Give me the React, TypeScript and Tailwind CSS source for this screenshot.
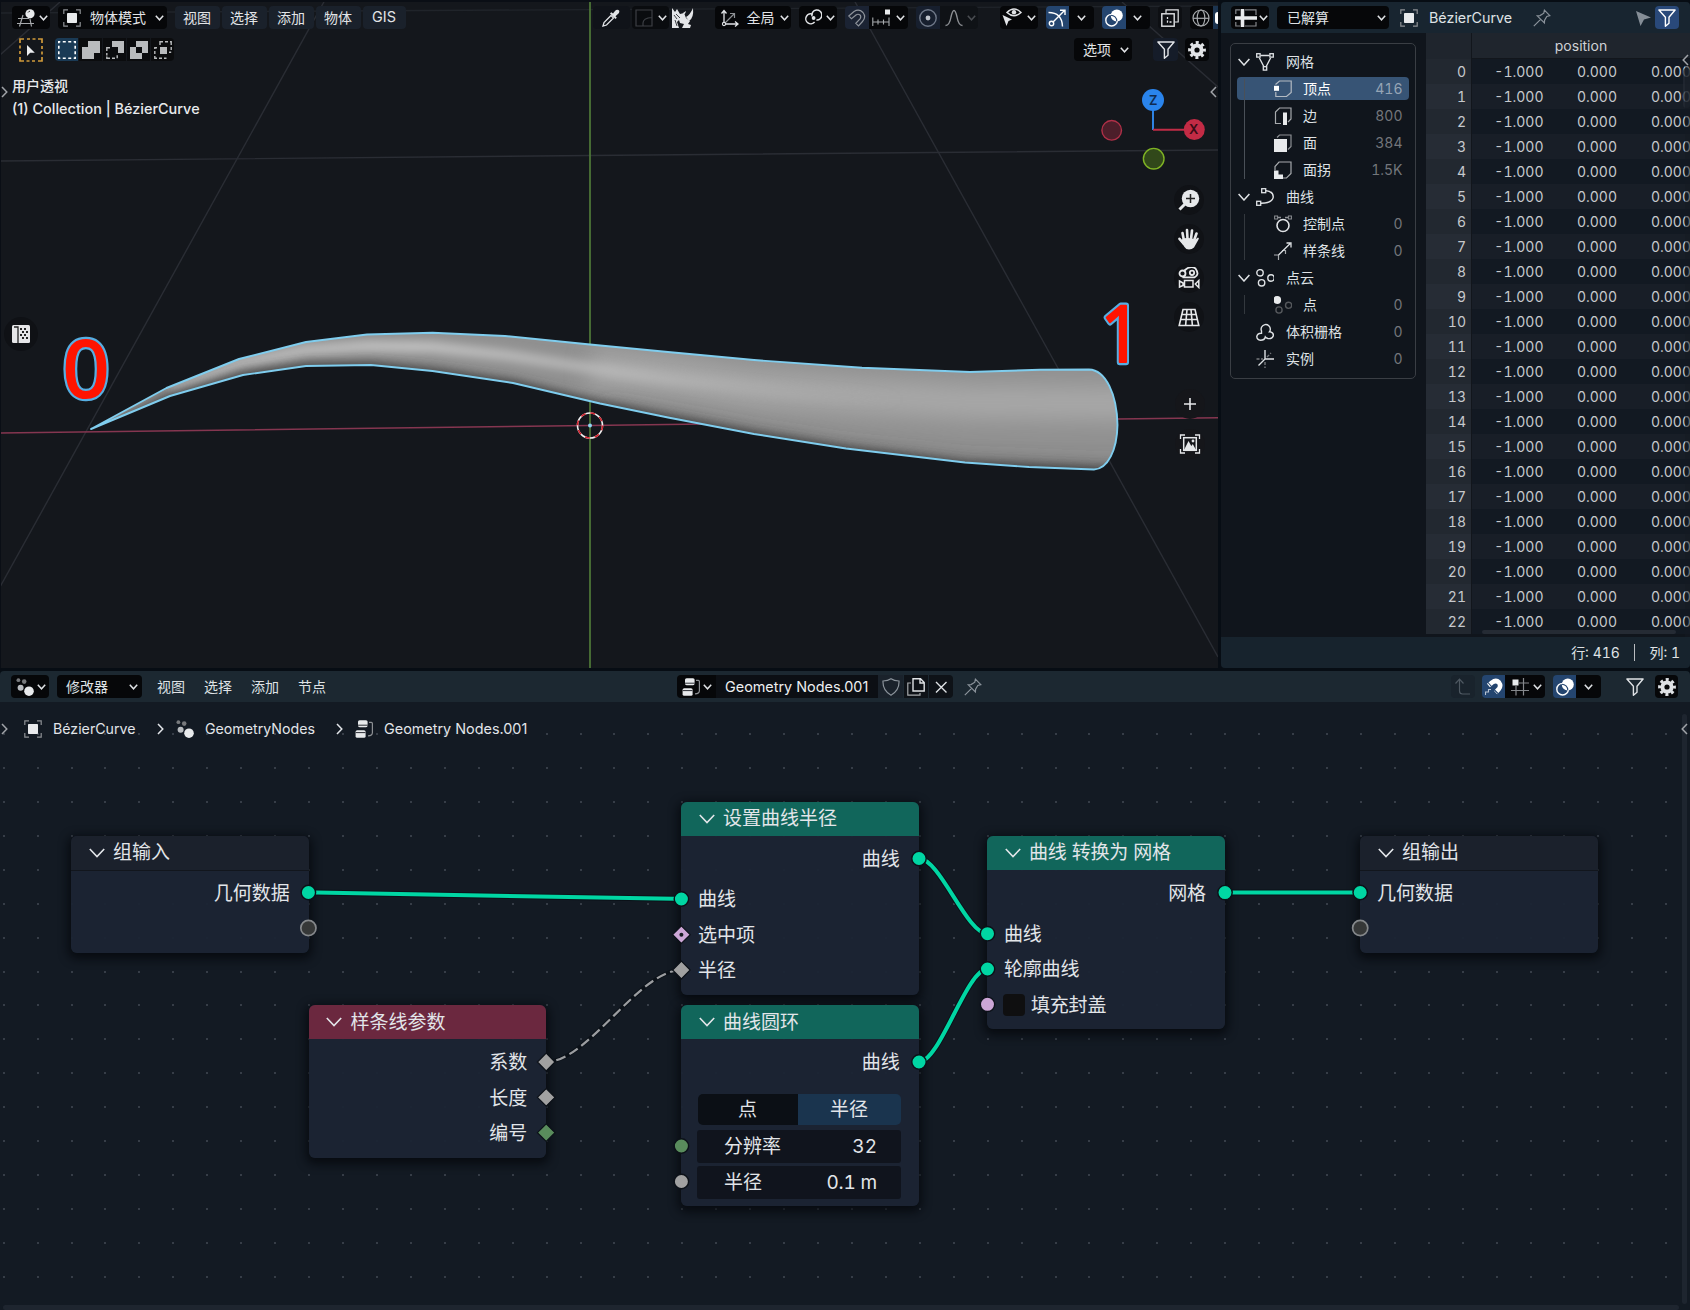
import React from "react";

type IconProps = { children: React.ReactNode; className?: string };

/** 18px icon frame shared by every toolbar glyph. */
const Ic = ({ children, className = "" }: IconProps) => (
  <svg viewBox="0 0 18 18" width={18} height={18} fill="none" stroke="currentColor" strokeWidth={1.4} className={`shrink-0 ${className}`}>
    {children}
  </svg>
);

const Down = ({ className = "" }: { className?: string }) => (
  <svg viewBox="0 0 9 6" width={9} height={6} fill="none" stroke="currentColor" strokeWidth={1.5} className={`shrink-0 ${className}`}>
    <path d="M0.8 0.8 4.5 4.8 8.2 0.8" />
  </svg>
);

const BigDown = ({ className = "" }: { className?: string }) => (
  <svg viewBox="0 0 16 10" width={16} height={10} fill="none" stroke="currentColor" strokeWidth={1.6} className={`shrink-0 ${className}`}>
    <path d="M0.8 1 8 8.6 15.2 1" />
  </svg>
);

const Side = ({ flip = false, className = "" }: { flip?: boolean; className?: string }) => (
  <svg viewBox="0 0 7 12" width={7} height={12} fill="none" stroke="currentColor" strokeWidth={1.5} className={className}>
    <path d={flip ? "M6 1 1.2 6 6 11" : "M1 1 5.8 6 1 11"} />
  </svg>
);

const ObjectIcon = () => (
  <Ic>
    <path d="M0.8 5V0.8H5M13 0.8h4.2V5M17.2 13v4.2H13M5 17.2H0.8V13" stroke="#8d9094" strokeWidth={1.2} />
    <rect x="4" y="4" width="10" height="10" rx="0.8" fill="#e8eaec" stroke="none" />
  </Ic>
);

const FilterIcon = ({ className = "" }: { className?: string }) => (
  <Ic className={className}>
    <path d="M0.9 1H17.1L11 8.2V14.2L7.4 17.2V8.2Z" strokeLinejoin="round" />
  </Ic>
);

const GearIcon = () => (
  <Ic>
    <circle cx="9" cy="9" r="4.6" strokeWidth={4} />
    <circle cx="9" cy="9" r="7.4" strokeWidth={3} strokeDasharray="3 2.812" strokeDashoffset="1.5" />
  </Ic>
);

const OverlayIcon = () => (
  <Ic>
    <circle cx="11.8" cy="6.4" r="6" fill="#fff" stroke="none" />
    <circle cx="6.6" cy="11.2" r="5.8" stroke="#fff" />
    <path d="M5.8 6.2a6 6 0 0 1 6 6" stroke="#24456f" strokeWidth={1.1} />
  </Ic>
);

const PinIcon = () => (
  <Ic>
    <path d="M11.4 1.2 16.8 6.6 13.8 7.4 11.6 11.2 11.4 14 4.2 6.8 7 6.6 10.8 4.2ZM7.6 10.4 0.8 17.2" strokeWidth={1.2} />
  </Ic>
);

const NodesDotsIcon = () => (
  <Ic>
    <g stroke="none">
      <circle cx="2.4" cy="2.2" r="1.9" fill="#77797c" />
      <circle cx="8.2" cy="3.6" r="2.3" fill="#77797c" />
      <circle cx="4.6" cy="9.8" r="3" fill="#b9bcc0" />
      <circle cx="13" cy="13.2" r="4.8" fill="#e8eaec" />
    </g>
  </Ic>
);

const NodeTreeIcon = () => (
  <Ic>
    <rect x="3" y="0.2" width="9.6" height="7" rx="1.6" fill="#e8eaec" stroke="none" />
    <rect x="0.6" y="10.2" width="10" height="7.6" rx="1.6" fill="#e8eaec" stroke="none" />
    <path d="M2.8 5.2h10M0.8 12.6h9.6" stroke="#15191f" strokeWidth={0.9} />
    <path d="M14 2.4h2.4q1 0 1 1v9.4q0 3-4.4 3" stroke="#8d9094" strokeWidth={1.2} />
  </Ic>
);

/** Rounded button holding toolbar content. */
const Btn = ({ children, className = "", tone = "bg-[#060709]" }: IconProps & { tone?: string }) => (
  <div className={`flex h-[23px] shrink-0 items-center rounded-[4px] ${tone} ${className}`}>{children}</div>
);

const ViewportScene = () => {
  const body =
    "M91 429 166.5 388 239 359 306 342 367 334.500 432.500 332.700 505 336 590 344.500 668 352 754 360 862 367.800 970 372 1040 369.800 1089 369.500C1106 370 1117 395 1117.500 425C1117 450 1108 469 1094 469.500L1029 467 965 462.500 846 448.500 754 434 668 417.500 600 403.500 513 383 432.500 371 371 365 306 366 243 375 170 396Z";
  return (
    <svg className="absolute inset-0" width={1218} height={668} viewBox="0 0 1218 668" fill="none">
      <defs>
        <clipPath id="body">
          <path d={body} />
        </clipPath>
        <filter id="wide" filterUnits="userSpaceOnUse" x="0" y="200" width="1218" height="400">
          <feGaussianBlur stdDeviation="11" />
        </filter>
        <filter id="narrow" filterUnits="userSpaceOnUse" x="0" y="200" width="1218" height="400">
          <feGaussianBlur stdDeviation="5" />
        </filter>
        <linearGradient id="shine" gradientUnits="userSpaceOnUse" x1="150" y1="0" x2="900" y2="0">
          <stop offset="0" stopColor="#c8c8c8" stopOpacity="0.6" />
          <stop offset="0.35" stopColor="#c6c6c6" />
          <stop offset="0.65" stopColor="#bcbcbc" stopOpacity="0.75" />
          <stop offset="1" stopColor="#aaaaaa" stopOpacity="0" />
        </linearGradient>
        <linearGradient id="shade" gradientUnits="userSpaceOnUse" x1="500" y1="0" x2="1000" y2="0">
          <stop offset="0" stopColor="#444444" stopOpacity="0" />
          <stop offset="0.5" stopColor="#4a4a4a" stopOpacity="0.8" />
          <stop offset="1" stopColor="#4c4c4c" stopOpacity="0.9" />
        </linearGradient>
      </defs>
      <g stroke="#2a2d34" strokeWidth={1.4}>
        <path d="M325 0 0 587" />
        <path d="M854 0 1218 657" />
        <path d="M60 2 0 55" />
        <path d="M1122 2 1218 87" />
        <path d="M0 161 590 155.500 1218 150" />
        <path d="M0 13 1218 6" stroke="#20242a" />
      </g>
      <path d="M0 433 590 425.500 1218 417.800" stroke="#853650" strokeWidth={1.5} />
      <path d="M590 0V668" stroke="#4f7a38" strokeWidth={1.7} />
      <g clipPath="url(#body)">
        <path d={body} fill="#909090" />
        <path d="M590 368 668 376 754 388 862 396 970 402 1180 404" stroke="#a8a8a8" strokeWidth={34} filter="url(#wide)" />
        <path d="M600 415 668 430 754 448 846 463 965 477 1180 486" stroke="url(#shade)" strokeWidth={24} filter="url(#wide)" />
        <path d="M170 391 240 363 306 350 367 346 432 347 505 355 590 368 668 379 790 392 900 400" stroke="url(#shine)" strokeWidth={10} filter="url(#narrow)" />
        <path d="M120 425 170 400 243 378 306 369 371 368 432 374 513 386 600 407 668 421 754 438 846 453 965 468 1160 476" stroke="#444444" strokeWidth={13} filter="url(#narrow)" />
      </g>
      <path d={body} stroke="#7fcdee" strokeWidth={1.9} strokeLinejoin="round" />
      <circle cx="590" cy="425.500" r="12.500" stroke="#f0f0f0" strokeWidth={1.6} />
      <circle cx="590" cy="425.500" r="12.500" stroke="#d0202c" strokeWidth={1.6} strokeDasharray="4.9 4.920" />
      <circle cx="590" cy="425.500" r="2" fill="#8fd4f2" />
      <g fontFamily="'Noto Sans', sans-serif" fontWeight={400} fontSize={79} textAnchor="middle" strokeLinejoin="round">
        <g stroke="#56aee2" strokeWidth={6.500} fill="#56aee2">
          <text transform="translate(86 397) scale(1.03 1)">0</text>
          <text transform="translate(1121 362) scale(0.92 1)">1</text>
        </g>
        <g stroke="#ff1400" strokeWidth={2.200} fill="#ff1400">
          <text transform="translate(86 397) scale(1.03 1)">0</text>
          <text transform="translate(1121 362) scale(0.92 1)">1</text>
        </g>
      </g>
      <g strokeWidth={2}>
        <path d="M1153 130V108" stroke="#2f83e3" />
        <path d="M1153 129.700H1186" stroke="#c02c46" />
        <circle cx="1153" cy="100" r="11" fill="#2a84ec" />
        <circle cx="1194.300" cy="129.600" r="10.500" fill="#c32b45" />
        <circle cx="1111.700" cy="130.300" r="9.800" fill="#4c1e2a" stroke="#b03048" strokeWidth={1.4} />
        <circle cx="1153.700" cy="158.700" r="10.300" fill="#31481a" stroke="#7fb324" strokeWidth={1.4} />
      </g>
      <g fontFamily="Inter, sans-serif" fontSize={13} fontWeight={600} textAnchor="middle">
        <text x="1153.300" y="104.800" fill="#0f2a50">Z</text>
        <text x="1193.800" y="134.300" fill="#3a0c16">X</text>
      </g>
    </svg>
  );
};

const Nav = ({ children, tone = "bg-[#101216]" }: { children: React.ReactNode; tone?: string }) => (
  <div className={`flex size-[30px] items-center justify-center rounded-full text-[#e6e8ea] ${tone}`}>
    <svg viewBox="0 0 22 22" width={22} height={22} fill="none" stroke="currentColor" strokeWidth={1.4}>
      {children}
    </svg>
  </div>
);

const MENUS = ["视图", "选择", "添加", "物体"];

const Viewport = () => (
  <section className="relative h-[668px] w-[1218px] shrink-0 overflow-hidden bg-[#14171c]">
    <ViewportScene />
    <div className="absolute inset-x-0 top-0 h-[2px] bg-[#0a0e15]" />
    <div className="absolute inset-y-0 left-0 w-px bg-[#0a0e15]" />
    <div className="relative flex h-full flex-col text-[#e2e4e7]">
      <div className="flex h-[29px] shrink-0 items-end pl-3">
        <Btn className="w-[38px] pl-[5px]">
          <Ic>
            <path d="M1 9.500h11M0 14.500h17M6 6 2.500 17.500M13 10l1.500 7.500" stroke="#a7aaad" strokeWidth={1.2} />
            <circle cx="13" cy="4.800" r="4.600" fill="#e8eaec" stroke="none" />
            <path d="M11 3.500a2.500 2.500 0 0 1 2-1.300" stroke="#333" strokeWidth={1} />
          </Ic>
          <Down className="ml-[4px]" />
        </Btn>
        <Btn className="ml-2 w-[109px] pl-[5px]">
          <ObjectIcon />
          <span className="ml-[9px] text-[14px]">物体模式</span>
          <Down className="ml-[9px]" />
        </Btn>
        <div className="ml-[7.500px] flex gap-[2px]">
          {MENUS.map((m) => (
            <div key={m} className="flex h-[23px] w-[45px] items-center justify-center rounded-[4px] bg-[#1a212b] text-[14px]">{m}</div>
          ))}
          <div className="flex h-[23px] w-[43px] items-center justify-center rounded-[4px] bg-[#1a212b] text-[14.400px]">GIS</div>
        </div>
        <Btn className="ml-[187px] w-[37px] justify-center" tone="bg-[#101319]">
          <Ic>
            <path d="M1 17 2 13.500 9 6.500 11.500 9 4.500 16Z" strokeWidth={1.3} />
            <path d="M8 4.500 13.500 10 14.800 8.800 13.500 7.300 17 4Q18 1.500 16.500 1 14.500 0 13 2L11 4.500 9.300 3.200Z" fill="currentColor" stroke="none" />
          </Ic>
        </Btn>
        <Btn className="ml-[2px] w-[37px] pl-[4px]" tone="bg-[#0a0c0f]">
          <Ic className="-ml-px text-[#3c3f44]">
            <path d="M8 17H1V1H17V17H8V14Q8 9 17 8.500" strokeWidth={1.2} />
          </Ic>
          <Down className="ml-[5px]" />
        </Btn>
        <div className="ml-[3px] flex h-[23px] w-[22px] items-center justify-center">
          <svg viewBox="0 0 22 20" width={22} height={20} fill="#e4e6e8">
            <path d="M0 0 3 4 5 1 8 6 12 5 14 10 18 13 16 16 19 17 18 20 10 20 12 16 8 15 7 12 5 14 7 20 0 20Z" />
            <path d="M21 0Q22 10 17 13L14 9Q18 7 21 0ZM14 3Q13 8 11 5Z" />
            <path d="M2 7 5 11M4 6 8 10M3 12 5 18" stroke="#14171c" strokeWidth={0.8} />
          </svg>
        </div>
        <Btn className="ml-[21px] w-[76px] pl-[6px]">
          <Ic>
            <path d="M3 16V2M0.500 4.500 3 1.500 5.500 4.500M3 15H16M14 12.500 17 15 14 17.500" strokeWidth={1.3} />
            <path d="M3 15 13 5M9 4.500h4.500V9" stroke="#8d9094" strokeWidth={1.2} />
            <circle cx="3" cy="15" r="1.600" fill="#060709" strokeWidth={1.100} />
          </Ic>
          <span className="ml-[8px] text-[14px]">全局</span>
          <Down className="ml-[5px]" />
        </Btn>
        <Btn className="ml-2 w-[38px] pl-[5px]">
          <Ic>
            <path d="M8.800 5.200A5 5 0 1 0 10.600 13" strokeWidth={1.500} />
            <path d="M8 7.200A5 5 0 1 1 12.400 11" strokeWidth={1.500} />
            <circle cx="9.600" cy="9" r="1.900" fill="currentColor" stroke="none" />
          </Ic>
          <Down className="ml-[4px]" />
        </Btn>
        <div className="ml-2 flex">
          <Btn className="w-[24px] justify-center rounded-r-none" tone="bg-[#1b2333]">
            <Ic className="text-[#8f949c]">
              <path d="M0.800 7 6 2.500Q11 -0.500 15 3.500 18.500 8 14.500 12.500L10.500 17 7.800 14.300 12 9.800Q13.500 7.500 12 6 10 4.500 8 6L3.500 9.800Z" strokeWidth={1.200} />
            </Ic>
          </Btn>
          <Btn className="w-[39px] rounded-l-none pl-[3px]">
            <Ic>
              <path d="M0.800 8.500V17M6 10.500v5M11.500 10.500v5M17 8.500V17M0.800 13H17" strokeWidth={1.100} stroke="#a7aaad" />
              <rect x="13" y="0.500" width="5" height="5" fill="#e8eaec" stroke="none" />
            </Ic>
            <Down className="ml-[6px]" />
          </Btn>
        </div>
        <div className="ml-2 flex">
          <Btn className="w-[24px] justify-center rounded-r-none" tone="bg-[#171f2e]">
            <Ic className="text-[#6f7888]">
              <circle cx="9" cy="9" r="8.200" />
              <circle cx="9" cy="9" r="2.400" fill="#c0c5cc" stroke="none" />
            </Ic>
          </Btn>
          <Btn className="w-[38px] rounded-l-none pl-[5px] text-[#8d9094]" tone="bg-[#0f1216]">
            <Ic><path d="M0.500 16.500Q4.500 16.500 6 8 7.500 1.500 9 1.500T12 8Q13.500 16.500 17.500 16.500" /></Ic>
            <Down className="ml-[4px] text-[#4a4d52]" />
          </Btn>
        </div>
        <Btn className="ml-[22px] w-[38px] pl-[2px]">
          <svg viewBox="0 0 20 19" width={20} height={19} fill="none" stroke="currentColor" strokeWidth={1.500}>
            <path d="M5 4.500Q12 -2.500 19 4.500 12 11 5 4.500Z" />
            <circle cx="12" cy="4.300" r="2.200" fill="currentColor" stroke="none" />
            <path d="M0.500 7 10 11.500 6.500 13 4.500 18Z" fill="currentColor" stroke="none" />
          </svg>
          <Down className="ml-[5px]" />
        </Btn>
        <div className="ml-2 flex">
          <Btn className="w-[23px] justify-center rounded-r-none text-white" tone="bg-[#24456f]">
            <Ic>
              <path d="M0.500 3.500Q14 3.500 14.500 17.500" />
              <path d="M4.800 13.200 16.500 1.500M12 1.200h5V6" />
              <circle cx="3.500" cy="14.500" r="2.200" />
            </Ic>
          </Btn>
          <Btn className="w-[25px] justify-center rounded-l-none"><Down /></Btn>
        </div>
        <div className="ml-[8px] flex">
          <Btn className="w-[24px] justify-center rounded-r-none" tone="bg-[#24456f]"><OverlayIcon /></Btn>
          <Btn className="w-[24px] justify-center rounded-l-none"><Down /></Btn>
        </div>
        <Btn className="ml-2 w-[24px] justify-center" tone="bg-[#0d0f13]">
          <Ic>
            <rect x="0.800" y="4.800" width="12.400" height="12.400" />
            <path d="M5 4V0.800H17.200V13H14" strokeWidth={1.200} />
            <path d="M6.500 8v5h4" strokeDasharray="2 1.500" strokeWidth={1.300} />
          </Ic>
        </Btn>
        <Btn className="ml-[8px] w-[23px] justify-center rounded-r-none">
          <Ic className="text-[#a7aaad]">
            <circle cx="9" cy="9" r="8" strokeWidth={1.200} />
            <ellipse cx="9" cy="9" rx="3.800" ry="8" strokeWidth={1.200} />
            <path d="M1 9.300h16" strokeWidth={1.200} />
          </Ic>
        </Btn>
        <div className="flex h-[23px] w-[5px] items-center justify-end overflow-hidden bg-[#1c3450]">
          <div className="h-[12px] w-[3px] rounded-l-full bg-white" />
        </div>
      </div>

      <div className="flex h-[33px] shrink-0 items-end pl-[19px]">
        <svg viewBox="0 0 24 24" width={24} height={24} fill="none" stroke="#d09a3a" strokeWidth={1.700}>
          <path d="M1 5V1h4M8 1h3M13.500 1h3M19 1h4v4M23 8v3M23 13.500v3M23 19v4h-4M16 23h-3M10.500 23h-3M5 23H1v-4M1 16v-3M1 10.500v-3" />
          <path d="M8 7v11l3.200-3.300h4.600Z" fill="#eceef0" stroke="none" />
        </svg>
        <div className="ml-[12px] flex h-[24px] gap-px pb-px">
          <div className="flex w-[23px] items-center justify-center rounded-l-[4px] bg-[#1a3a55] text-white">
            <Ic><rect x="0.800" y="0.800" width="16.400" height="16.400" strokeDasharray="3 2.466" strokeDashoffset="1.500" strokeWidth={1.600} /></Ic>
          </div>
          <div className="flex w-[23px] items-center justify-center bg-[#0b0c0e]">
            <Ic><path d="M6 0H18V12H12V18H0V6H6Z" fill="#b9bbbd" stroke="none" /></Ic>
          </div>
          <div className="flex w-[23px] items-center justify-center bg-[#0b0c0e]">
            <Ic>
              <path d="M6 0H18V12H12V6H6Z" fill="#b9bbbd" stroke="none" />
              <path d="M4 6.800H0.800V10M0.800 12v2.500M0.800 15.500v1.700H4M6 17.200h3M11.200 17.200v-3" stroke="#b9bbbd" />
            </Ic>
          </div>
          <div className="flex w-[23px] items-center justify-center bg-[#0b0c0e]">
            <Ic><path d="M6 0H18V12H12V18H0V6H6ZM6 6V12H12V6Z" fill="#b9bbbd" fillRule="evenodd" stroke="none" /></Ic>
          </div>
          <div className="flex w-[23px] items-center justify-center rounded-r-[4px] bg-[#0b0c0e]">
            <Ic>
              <path d="M6 4V0.800h3M11 0.800h3M16 0.800h1.200V4M17.200 6v3M17.200 11.200H15M12.500 17.200H10M8 17.200H5M3 17.200H0.800V15M0.800 13v-3M0.800 8V6.800H3" stroke="#b9bbbd" />
              <rect x="6" y="6" width="7" height="7" fill="#b9bbbd" stroke="none" />
            </Ic>
          </div>
        </div>
        <Btn className="mb-px ml-[900px] w-[58px] pl-[9px]">
          <span className="text-[14px]">选项</span>
          <Down className="ml-[9px]" />
        </Btn>
        <Btn className="mb-px ml-[21px] w-[25px] justify-center" tone="bg-[#151c29]"><FilterIcon /></Btn>
        <Btn className="mb-px ml-[7px] w-[24px] justify-center"><GearIcon /></Btn>
      </div>

      <div className="mt-[14px] flex flex-col pl-3 font-medium text-[#e8eaec]">
        <span className="h-[22px] text-[14px] leading-[20px]">用户透视</span>
        <span className="h-[22px] text-[14.450px] leading-[22px]">(1) Collection | BézierCurve</span>
      </div>
    </div>
    <Side className="absolute left-[1px] top-[86px] text-[#a0a3a8]" />
    <Side flip className="absolute left-[1210px] top-[86px] text-[#a0a3a8]" />

    <div className="absolute left-[1174px] top-[185px] flex flex-col gap-[9px]">
      <Nav>
        <circle cx="12.500" cy="9.500" r="8.700" fill="currentColor" stroke="none" />
        <path d="M7 15 1.500 20.500" strokeWidth={3} />
        <path d="M12.500 5v9M8 9.500h9" stroke="#222" strokeWidth={1.500} />
      </Nav>
      <Nav>
        <path d="M6 13 4.500 5M9.500 11 9 2M13 11 14 2.500M16 12.500 18.500 5.500M5.500 15.500 1.500 10.800" strokeWidth={2.600} strokeLinecap="round" />
        <path d="M4.700 11Q8 9 17.300 11.500L20 9.500Q21.500 10 20.500 11.500L16 19.500Q14 21.500 11 21.500 8 21.500 6.500 19L2.500 13Z" fill="currentColor" stroke="none" />
      </Nav>
      <Nav>
        <circle cx="4.500" cy="6.500" r="3" strokeWidth={1.800} />
        <path d="M6.500 3.500Q12 -2 17.500 1.500 22 8 16.500 10.300H4.500" strokeWidth={1.800} />
        <circle cx="14" cy="5.800" r="2.200" strokeWidth={1.800} />
        <path d="M6.500 13.500h8.500v6.500H6.500ZM1.500 14l3.500 2v2.500l-3.500 1.500Z" strokeWidth={1.500} />
        <path d="M20.800 13.500v7l-3.500-3.500Z" strokeWidth={1.500} />
      </Nav>
      <Nav>
        <path d="M5 3.500H17L20.800 19.500H1.200ZM3.600 8.500H18.400M2.500 13.500H19.500M9 3.500 7.600 19.500M13 3.500 14.400 19.500" strokeWidth={1.600} />
      </Nav>
    </div>
    <div className="absolute left-[1175px] top-[389px] flex flex-col gap-[10px]">
      <Nav tone="bg-[#15161a]"><path d="M11 5v12M5 11h12" strokeWidth={1.600} /></Nav>
      <Nav tone="bg-[#15161a]">
        <path d="M1.500 6V2H6M16 2h4.500v4M20.500 16v4H16M6 20H1.500v-4" strokeWidth={1.300} />
        <rect x="4.700" y="4.700" width="12.600" height="12.600" strokeWidth={1.500} />
        <path d="M5 17 9.500 8 12.300 13 13.800 11 17 17Z" fill="currentColor" stroke="none" />
        <circle cx="14" cy="8" r="1.400" fill="currentColor" stroke="none" />
      </Nav>
    </div>
    <div className="absolute left-[4px] top-[317px] flex size-[34px] items-center justify-center rounded-full bg-[#0f1115]">
      <Ic>
        <rect x="0" y="0" width="18" height="18" rx="1.500" fill="#e6e6e8" stroke="none" />
        <path d="M2 2h4v4M6 5v13" stroke="#222" strokeWidth={1.300} />
        <path d="M8 4h8M10 7h8M8 10h8M10 13h6" stroke="#222" strokeWidth={2} strokeDasharray="2 2" />
      </Ic>
    </div>
  </section>
);

type TreeRow = { label: string; value?: string; child?: boolean; icon: React.ReactNode; active?: boolean; open?: boolean };

const cube = <path d="M1 9V5.500L5 1H17V12.500L12.500 17H8" stroke="#a7aaad" strokeWidth={1.200} />;

const TREE: TreeRow[] = [
  { label: "网格", open: true, icon: <><path d="M4.500 2.500h9M3.400 5 7.800 13.500M14.600 5l-4.400 8.500" /><rect x="0.700" y="0.700" width="3.400" height="3.400" strokeWidth={1.300} /><rect x="13.900" y="0.700" width="3.400" height="3.400" strokeWidth={1.300} /><rect x="7.300" y="13.700" width="3.400" height="3.400" strokeWidth={1.300} /></> },
  { label: "顶点", value: "416", child: true, active: true, icon: <><path d="M1.500 4.500 5.500 1H17.200V12.500L12.500 16.500H1.800V12" stroke="#b3bac2" strokeWidth={1.200} /><rect x="0" y="5.800" width="5" height="5" fill="#fff" stroke="none" /></> },
  { label: "边", value: "800", child: true, icon: <><path d="M7 16.500H1.500V5L5.500 1H17V12L14 15" stroke="#a7aaad" strokeWidth={1.200} /><rect x="9" y="5.500" width="4" height="12.500" fill="#e8eaec" stroke="none" /></> },
  { label: "面", value: "384", child: true, icon: <><path d="M3 3.500 5.500 1H17V12.500L14 15.500" stroke="#8d9094" strokeWidth={1.200} /><rect x="0" y="5" width="13" height="13" fill="#e8eaec" stroke="none" /></> },
  { label: "面拐", value: "1.5K", child: true, icon: <>{cube}<path d="M0 9.500H4.500V13.500H9V18H0Z" fill="#e8eaec" stroke="none" /></> },
  { label: "曲线", open: true, icon: <><rect x="0.700" y="13.300" width="4" height="4" strokeWidth={1.300} /><rect x="5.700" y="0.700" width="4" height="4" strokeWidth={1.300} /><path d="M10 2.700Q17 3.200 17.300 9 16.500 15 5 15.300" /></> },
  { label: "控制点", value: "0", child: true, icon: <><circle cx="9" cy="10.500" r="6" strokeWidth={1.600} /><path d="M4 2.500H14" stroke="#8d9094" strokeDasharray="3 4" /><rect x="0.600" y="1" width="3" height="3" stroke="#8d9094" strokeWidth={1} /><rect x="14.400" y="1" width="3" height="3" stroke="#8d9094" strokeWidth={1} /></> },
  { label: "样条线", value: "0", child: true, icon: <><path d="M0 13h4.500v5M8 8.500h3.500V12" stroke="#a7aaad" strokeWidth={1.200} /><path d="M4.500 13 16 1.800M12.500 1h4.500v4.500" strokeWidth={1.300} /></> },
  { label: "点云", open: true, icon: <><circle cx="4" cy="3.800" r="3.200" /><circle cx="5.600" cy="13.800" r="3.200" /><circle cx="15" cy="9" r="3.200" /></> },
  { label: "点", value: "0", child: true, icon: <><circle cx="3.200" cy="4" r="3.900" fill="#e8eaec" stroke="none" /><circle cx="5" cy="14" r="3.100" stroke="#55585c" /><circle cx="14.600" cy="9.300" r="3.100" stroke="#55585c" /></> },
  { label: "体积栅格", value: "0", icon: <path d="M5.500 8A4.600 4.600 0 1 1 14.300 6.500Q14.200 8 13.500 8.800 17.500 9 17.400 12.500 16.500 16.200 12 15.500 10 15 9.300 14 8.500 17.300 4.500 17.300 0.800 16.800 0.800 13.500 1.500 10 5.500 10.300V7.500" /> },
  { label: "实例", value: "0", icon: <><path d="M9 0v9h9M9 9 2.500 15.500" /><path d="M0.500 9H7M9 12v6M11 7l4-4" stroke="#777a7e" strokeDasharray="3 1.500" /></> },
];

const ROWS = Array.from({ length: 23 }, (_, i) => i);

const Spreadsheet = () => (
  <section className="relative flex h-[666px] w-[469px] shrink-0 flex-col overflow-hidden rounded-[4px] bg-[#10151c] text-[#dfe2e5]">
    <header className="flex h-[31px] shrink-0 items-center bg-[#182530] pl-[10px]">
      <Btn className="w-[38px] pl-[4px]">
        <svg viewBox="0 0 22 18" width={22} height={18} fill="none" stroke="#85888c" strokeWidth={1.200}>
          <path d="M5 0.800H0.800V5M10 0.800h11V6M0.800 13V17H5M10 17h11V13" />
          <path d="M7.500 0V18M0 9H22" stroke="#e8eaec" strokeWidth={3.600} />
        </svg>
        <Down className="ml-[2px]" />
      </Btn>
      <Btn className="ml-[8px] w-[112px] pl-[10px] pr-[3px]">
        <span className="grow text-[14px]">已解算</span>
        <Down />
      </Btn>
      <div className="ml-[11px] flex items-center"><ObjectIcon /></div>
      <span className="ml-[11px] w-[90px] pt-px text-[14.300px]">BézierCurve</span>
      <div className="ml-[14px] text-[#8a929a]"><PinIcon /></div>
      <svg viewBox="0 0 15 16" width={15} height={16} fill="#858e97" className="ml-[85px]"><path d="M0 1 15 7.500 8 9.500 4.500 16Z" /></svg>
      <Btn className="ml-[4px] w-[24px] justify-center text-white" tone="bg-[#29497a]"><FilterIcon /></Btn>
    </header>
    <div className="flex h-[604px] shrink-0">
      <aside className="w-[205px] shrink-0 pl-[9px] pt-[10px]">
        <div className="relative h-[336px] w-[186px] rounded-[5px] border border-[#3a3e44] pt-[6px]">
          {TREE.map((r) => (
            <div key={r.label} className={`mx-[6px] mb-[4px] flex h-[23px] items-center rounded-[4px] text-[14px] ${r.active ? "bg-[#375475] text-white" : ""}`}>
              <div className={`flex shrink-0 items-center ${r.child ? "w-[37px]" : "w-[19px]"}`}>
                {r.open && (
                  <svg viewBox="0 0 12 8" width={12} height={8} fill="none" stroke="currentColor" strokeWidth={1.500} className="ml-px">
                    <path d="M0.600 1 6 7 11.400 1" />
                  </svg>
                )}
              </div>
              <Ic>{r.icon}</Ic>
              <span className={`grow ${r.child ? "ml-[11px]" : "ml-[12px]"}`}>{r.label}</span>
              <span className={`mr-[6.500px] tabular-nums ${r.active ? "text-[#96a5b5]" : "text-[#73767b]"}`}>{r.value}</span>
            </div>
          ))}
          <div className="absolute left-[13px] top-[35px] h-[100px] w-px bg-[#4a5058]" />
          <div className="absolute left-[13px] top-[170px] h-[46px] w-px bg-[#33383e]" />
          <div className="absolute left-[13px] top-[251px] h-[19px] w-px bg-[#33383e]" />
        </div>
      </aside>
      <div className="flex w-[264px] shrink-0 flex-col overflow-hidden">
        <div className="flex h-[26px] shrink-0 bg-[#1f252d] text-[14px] text-[#cfd2d5]">
          <div className="w-[46px] border-r border-[#12161c]" />
          <div className="flex w-[218px] items-center justify-center border-b border-[#12161c]">position</div>
        </div>
        {ROWS.map((i) => (
          <div key={i} className={`flex h-[25px] shrink-0 items-center text-[14px] tabular-nums text-[#c6c9cd] ${i % 2 ? "bg-[#181e27]" : "bg-[#121922]"}`}>
            <div className={`flex h-full w-[46px] shrink-0 items-center justify-end border-r border-[#12161c] pr-[5px] ${i % 2 ? "bg-[#262c35]" : "bg-[#222830]"}`}>{i}</div>
            <span className="w-[71.500px] shrink-0 text-right">-1.000</span>
            <span className="w-[73.500px] shrink-0 text-right">0.000</span>
            <span className="w-[74px] shrink-0 text-right">0.000</span>
          </div>
        ))}
      </div>
    </div>
    <footer className="flex h-[31px] shrink-0 items-center justify-end bg-[#17232d] pr-[10px] text-[14px] tabular-nums">
      <span>行: 416</span>
      <span className="mr-[14px] ml-[14px] h-[17px] w-[1.500px] bg-[#b9bcc0]" />
      <span>列: 1</span>
    </footer>
    <div className="absolute left-[261px] top-[628px] h-[4px] w-[194px] rounded-full bg-[#252b34]" />
    <div className="absolute left-[462px] top-[66px] h-[40px] w-[7px] rounded-full bg-[#252b34]/70" />
    <div className="absolute top-[57px] left-[464px] h-[578px] w-[5px] bg-[#141a22]/50" />
    <Side flip className="absolute left-[461px] top-[52px] text-[#a0a3a8]" />
  </section>
);

const NodeBox = ({ title, tone, className, children }: { title: string; tone: string; className: string; children: React.ReactNode }) => (
  <div className={`absolute w-[237.500px] overflow-hidden rounded-[6px] bg-[#1b2434]/95 text-[19px] text-[#e2e5e9] ${className}`}>
    <div className={`flex h-[33.500px] items-center pl-[17.500px] ${tone}`}>
      <BigDown />
      <span className="ml-[8.500px] leading-[31px]">{title}</span>
    </div>
    {children}
  </div>
);

const Out = ({ children }: { children: string }) => <div className="flex h-[35.300px] items-center justify-end pr-[18.700px]">{children}</div>;
const In = ({ children }: { children: string }) => <div className="flex h-[35.300px] items-center pl-[17px]">{children}</div>;

const SHADOW = "shadow-[0_3px_10px_3px_rgba(4,7,11,0.75)]";

const DOTS_X = Array.from({ length: 50 }, (_, i) => 3.700 + i * 33.930);
const DOTS_Y = Array.from({ length: 17 }, (_, i) => 32 + i * 33.930);

const Round = ({ x, y, c }: { x: number; y: number; c: string }) => (
  <circle cx={x} cy={y} r={7.200} fill={c} stroke="#0c1118" strokeWidth={1.400} />
);
const Diamond = ({ x, y, c }: { x: number; y: number; c: string }) => (
  <path d={`M${x} ${y - 8.800} L${x + 8.800} ${y} L${x} ${y + 8.800} L${x - 8.800} ${y} Z`} fill={c} stroke="#0c1118" strokeWidth={1.200} />
);

const GREEN = "#00d6a3";

const NodeCanvas = () => (
  <div className="relative h-[608px] overflow-hidden bg-[#131a23]">
    <svg className="absolute inset-0" width={1690} height={608} viewBox="0 0 1690 608">
      <g fill="#363d47">
        {DOTS_Y.map((y) => DOTS_X.map((x) => <rect key={`${x}-${y}`} x={Math.round(x) - 1} y={Math.round(y) - 1} width={2} height={2} />))}
      </g>
    </svg>
    <NodeBox title="组输入" tone="bg-[#1b212c] shadow-[0_1px_0_#12161d]" className={`left-[71px] top-[134px] h-[117px] ${SHADOW}`}>
      <div className="pt-[6px]"><Out>几何数据</Out></div>
    </NodeBox>
    <NodeBox title="样条线参数" tone="bg-[#6b283f]" className={`left-[308.500px] top-[303.300px] h-[152.500px] ${SHADOW}`}>
      <div className="pt-[6.500px]"><Out>系数</Out><Out>长度</Out><Out>编号</Out></div>
    </NodeBox>
    <NodeBox title="设置曲线半径" tone="bg-[#11665b]" className={`left-[681px] top-[100px] h-[192.700px] ${SHADOW}`}>
      <div className="pt-[6.500px]"><Out>曲线</Out></div>
      <div className="pt-[5px]"><In>曲线</In><In>选中项</In><In>半径</In></div>
    </NodeBox>
    <NodeBox title="曲线圆环" tone="bg-[#11665b]" className={`left-[681px] top-[303.300px] h-[200.700px] ${SHADOW}`}>
      <div className="pt-[6.500px]"><Out>曲线</Out></div>
      <div className="mr-[18px] ml-[16.500px] mt-[13px] flex h-[31.500px] overflow-hidden rounded-[5px] text-center leading-[31px]">
        <div className="w-[100px] bg-[#0b0f15]">点</div>
        <div className="grow bg-[#1a344e]">半径</div>
      </div>
      <div className="mr-[17.500px] ml-[16px] mt-[5px] flex h-[32.500px] items-center justify-between rounded-[3px] bg-[#10141d] pl-[27px] pr-[24px] tabular-nums">
        <span>分辨率</span><span>32</span>
      </div>
      <div className="mr-[17.500px] ml-[16px] mt-[3.500px] flex h-[32.500px] items-center justify-between rounded-[3px] bg-[#10141d] pl-[27px] pr-[24px] tabular-nums">
        <span>半径</span><span className="tracking-[-0.200px]">0.1 m</span>
      </div>
    </NodeBox>
    <NodeBox title="曲线 转换为 网格" tone="bg-[#11665b]" className={`left-[987px] top-[134px] h-[192.700px] tracking-[-0.200px] ${SHADOW}`}>
      <div className="pt-[6.500px]"><Out>网格</Out></div>
      <div className="pt-[5.500px]">
        <In>曲线</In><In>轮廓曲线</In>
        <div className="flex h-[35.300px] items-center pl-[16px]">
          <span className="mr-[6px] size-[22px] rounded-[4px] bg-[#0f0f10]" />填充封盖
        </div>
      </div>
    </NodeBox>
    <NodeBox title="组输出" tone="bg-[#1b212c] shadow-[0_1px_0_#12161d]" className={`left-[1360px] top-[134px] h-[117px] ${SHADOW}`}>
      <div className="pt-[6px]"><In>几何数据</In></div>
    </NodeBox>
    <svg className="absolute inset-0" width={1690} height={608} viewBox="0 702 1690 608" fill="none">
      <g stroke="#0b1118" strokeWidth={6}>
        <path d="M316 892.600 674 898.800M1232 892.600H1353" />
        <path d="M919 858.500C940 858.500 966.500 933.700 987.500 933.700M919 1062C940 1062 966.500 969 987.500 969" />
      </g>
      <g stroke={GREEN} strokeWidth={4}>
        <path d="M316 892.600 674 898.800M1232 892.600H1353" />
        <path d="M919 858.500C940 858.500 966.500 933.700 987.500 933.700M919 1062C940 1062 966.500 969 987.500 969" />
      </g>
      <path d="M546 1062C588 1062 639 970 681.400 970" stroke="#0b1118" strokeWidth={4} />
      <path d="M546 1062C588 1062 639 970 681.400 970" stroke="#9b9da0" strokeWidth={2.200} strokeDasharray="10 4.500" strokeDashoffset={4} />
      <Round x={308.400} y={892.500} c={GREEN} />
      <circle cx={308.400} cy={928} r={7.600} fill="#363838" stroke="#85888b" strokeWidth={1.700} />
      <Round x={1360.200} y={892.500} c={GREEN} />
      <circle cx={1360.200} cy={928} r={7.600} fill="#363838" stroke="#85888b" strokeWidth={1.700} />
      <Diamond x={546.200} y={1062} c="#a1a1a1" />
      <Diamond x={546.200} y={1097.300} c="#a1a1a1" />
      <Diamond x={546.200} y={1132.700} c="#598c5c" />
      <Round x={919} y={858.500} c={GREEN} />
      <Round x={681.400} y={899} c={GREEN} />
      <Diamond x={681.400} y={934.700} c="#cca6d6" />
      <circle cx={681.400} cy={934.700} r={2} fill="#15191f" />
      <Diamond x={681.400} y={970} c="#a1a1a1" />
      <Round x={919} y={1062} c={GREEN} />
      <Round x={681.400} y={1146} c="#598c5c" />
      <Round x={681.400} y={1181.500} c="#a1a1a1" />
      <Round x={1225} y={892.600} c={GREEN} />
      <Round x={987.500} y={933.700} c={GREEN} />
      <Round x={987.500} y={969} c={GREEN} />
      <Round x={987.500} y={1004.300} c="#cca6d6" />
    </svg>
    <div className="relative flex h-[54px] items-center pl-[1px] text-[14.400px] text-[#e2e5e9]">
      <Side className="text-[#a0a3a8]" />
      <div className="ml-[16px]"><ObjectIcon /></div>
      <span className="ml-[11px] w-[104px] text-[14.200px]">BézierCurve</span>
      <Side />
      <div className="ml-[12px]"><NodesDotsIcon /></div>
      <span className="ml-[11px] w-[131px] text-[14.200px]">GeometryNodes</span>
      <Side />
      <div className="ml-[12px]"><NodeTreeIcon /></div>
      <span className="ml-[11px]">Geometry Nodes.001</span>
    </div>
    <div className="absolute left-[1682px] top-[12px] h-[590px] w-[5px] rounded-full bg-[#1e252f]" />
    <div className="absolute left-[3px] top-[603px] h-[5px] w-[1676px] rounded-full bg-[#1e252f]" />
    <Side flip className="absolute left-[1681px] top-[21px] text-[#a0a3a8]" />
  </div>
);

const NodeEditor = () => (
  <section className="mt-[3px] h-[639px] overflow-hidden rounded-t-[4px]">
    <header className="flex h-[31px] items-center bg-[#1c2831] pl-[11px] text-[14px] text-[#dfe2e5]">
      <Btn className="w-[38px] pl-[5px]"><NodesDotsIcon /><Down className="ml-[3px]" /></Btn>
      <Btn className="ml-2 w-[85px] pl-[9px] pr-[4px]"><span className="grow">修改器</span><Down /></Btn>
      <div className="ml-[15px] flex gap-[19px]">
        {["视图", "选择", "添加", "节点"].map((m) => <span key={m}>{m}</span>)}
      </div>
      <div className="ml-[351px] flex">
        <Btn className="w-[39px] rounded-r-none pl-[5px]"><NodeTreeIcon /><Down className="ml-[3px]" /></Btn>
        <Btn className="w-[162px] rounded-none pt-px pl-[9px] text-[14.400px] text-[#eceef0]" tone="bg-[#0c0f14]">Geometry Nodes.001</Btn>
        <div className="flex h-[23px] w-[25px] items-center justify-center bg-[#1a222b] text-[#8a929a]">
          <Ic><path d="M9 0.800Q12 3 17 3 17.500 12.500 9 17.200 0.500 12.500 1 3 6 3 9 0.800Z" strokeWidth={1.200} /></Ic>
        </div>
        <Btn className="ml-px w-[24px] justify-center rounded-none" tone="bg-[#0e1217]">
          <Ic>
            <path d="M6 0.800H13.500L17.200 4.500V13H6ZM13 1v4h4" />
            <path d="M4 5H0.800V17.200H13V15" stroke="#a7aaad" strokeWidth={1.200} />
          </Ic>
        </Btn>
        <Btn className="ml-px w-[24px] justify-center rounded-l-none" tone="bg-[#0e1217]"><Ic><path d="M4 4l10.500 10.500M14.500 4L4 14.500" /></Ic></Btn>
        <div className="ml-[11px] flex items-center text-[#8a929a]"><PinIcon /></div>
      </div>
      <Btn className="ml-[469px] w-[24px] justify-center text-[#4e5861]" tone="bg-[#19232c]">
        <Ic><path d="M5.500 1.500V13q0 3 3 3H16M1.500 5.500 5.500 1.200 9.500 5.500" strokeWidth={1.200} /></Ic>
      </Btn>
      <div className="ml-[7px] flex">
        <Btn className="w-[23px] justify-center rounded-r-none text-white" tone="bg-[#24456f]">
          <Ic>
            <path d="M3.500 7.500 7 4.500Q11 1.500 14 4.500 16.500 8 13.500 11.500L10.500 14.500" strokeWidth={4.600} />
            <path d="M3 4.500 6.500 8.500M9 11.500 13 15.500" stroke="#24456f" strokeWidth={1.100} />
            <path d="M0.500 17V14H3.500V11.500H6" strokeWidth={1.100} stroke="#b7c3d2" />
          </Ic>
        </Btn>
        <Btn className="w-[40px] rounded-l-none pl-[6px]">
          <Ic>
            <path d="M5 8V17.500M12.500 0V17.500M8 5H18M0 12.500H18" stroke="#85888c" strokeWidth={1.200} />
            <rect x="1.500" y="1.500" width="6" height="6" fill="#e8eaec" stroke="none" />
          </Ic>
          <Down className="ml-[4px]" />
        </Btn>
      </div>
      <div className="ml-[8px] flex">
        <Btn className="w-[23px] justify-center rounded-r-none" tone="bg-[#24456f]"><OverlayIcon /></Btn>
        <Btn className="w-[25px] justify-center rounded-l-none"><Down /></Btn>
      </div>
      <div className="ml-[25px]"><FilterIcon /></div>
      <Btn className="ml-[11px] w-[23px] justify-center"><GearIcon /></Btn>
    </header>
    <NodeCanvas />
  </section>
);

export default function App() {
  return (
    <div className="h-[1310px] w-[1690px] overflow-hidden bg-[#070d14] font-['Inter','Noto_Sans_CJK_SC',sans-serif] leading-none whitespace-nowrap">
      <div className="flex h-[668px] items-end gap-[3px]">
        <Viewport />
        <Spreadsheet />
      </div>
      <NodeEditor />
    </div>
  );
}
